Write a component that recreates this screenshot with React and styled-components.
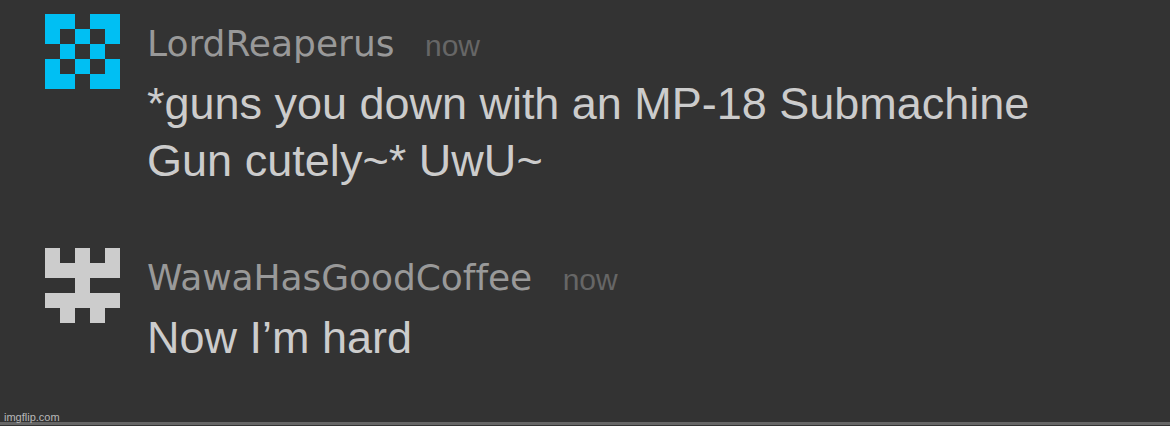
import React from "react";
import styled, { createGlobalStyle } from "styled-components";

const GlobalStyle = createGlobalStyle`
  body {
    margin: 0;
    background: #333333;
  }
`;

const Page = styled.main`
  box-sizing: border-box;
  display: flex;
  flex-direction: column;
  width: 1170px;
  height: 426px;
  padding-top: 14px;
  overflow: hidden;
  background: #333333;
  font-family: "Liberation Sans", Arial, sans-serif;
`;

const Message = styled.article`
  display: flex;
  align-items: flex-start;
  gap: 27px;
  height: 234px;
  flex: none;
  padding-left: 45px;

  & + & {
    height: 160px;
  }
`;

const Avatar = styled.svg`
  flex: none;
  width: 75px;
  height: 75px;
  fill: ${(p) => p.$color};
`;

const Content = styled.div`
  display: flex;
  flex-direction: column;
  gap: 2px;
`;

const Header = styled.header`
  display: flex;
  align-items: baseline;
  gap: 30.5px;
  height: 59px;
  line-height: 59px;
`;

const Author = styled.span`
  color: #999999;
  font-family: "DejaVu Sans", Verdana, sans-serif;
  font-size: 36px;
  font-variant-ligatures: none;
  letter-spacing: ${(p) => p.$tracking}px;
`;

const Time = styled.time`
  color: #666666;
  font-size: 30px;
`;

const Line = styled.p`
  margin: 0;
  color: #cccccc;
  font-size: 45px;
  line-height: 57px;
  white-space: nowrap;
  letter-spacing: ${(p) => p.$tracking || 0}px;
`;

const Text = styled.div`
  display: flex;
  flex-direction: column;
`;

const Footer = styled.footer`
  margin-top: auto;
  height: 18px;
  flex: none;
  box-sizing: border-box;
  border-bottom: 1px solid #333333;
`;

const Credit = styled.div`
  box-sizing: border-box;
  height: 14px;
  padding-left: 4px;
  color: #b8b8b8;
  font-size: 11px;
  line-height: 19px;
  position: relative;
  z-index: 1;
`;

const Rule = styled.div`
  height: 3px;
  background: #666666;
`;

const messages = [
  {
    author: "LordReaperus",
    tracking: 0,
    color: "#00bff3",
    grid: ["11011", "10101", "01010", "10101", "11011"],
    lines: [
      { text: "*guns you down with an MP-18 Submachine", tracking: -0.02 },
      { text: "Gun cutely~* UwU~", tracking: 0.03 },
    ],
  },
  {
    author: "WawaHasGoodCoffee",
    tracking: -0.07,
    color: "#cccccc",
    grid: ["10101", "11111", "00100", "11111", "01010"],
    lines: [{ text: "Now I’m hard", tracking: 0 }],
  },
];

function PixelAvatar({ grid, color }) {
  return (
    <Avatar viewBox="0 0 5 5" shapeRendering="crispEdges" $color={color}>
      {grid.flatMap((row, y) =>
        [...row].map((cell, x) =>
          cell === "1" ? <rect key={`${x}-${y}`} x={x} y={y} width="1" height="1" /> : null
        )
      )}
    </Avatar>
  );
}

export default function App() {
  return (
    <>
      <GlobalStyle />
      <Page>
        {messages.map((m) => (
          <Message key={m.author}>
            <PixelAvatar grid={m.grid} color={m.color} />
            <Content>
              <Header>
                <Author $tracking={m.tracking}>{m.author}</Author>
                <Time>now</Time>
              </Header>
              <Text>
                {m.lines.map((l) => (
                  <Line key={l.text} $tracking={l.tracking}>{l.text}</Line>
                ))}
              </Text>
            </Content>
          </Message>
        ))}
        <Footer>
          <Credit>imgflip.com</Credit>
          <Rule />
        </Footer>
      </Page>
    </>
  );
}
